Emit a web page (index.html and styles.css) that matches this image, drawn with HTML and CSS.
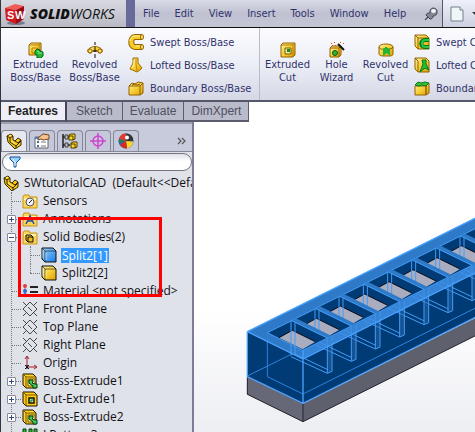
FILE: index.html
```html
<!DOCTYPE html>
<html lang="en">
<head>
<meta charset="utf-8">
<title>SolidWorks</title>
<link rel="stylesheet" href="styles.css">
</head>
<body>
<svg class="defs" aria-hidden="true">
  <defs>
    <linearGradient id="gold" x2="1" y2="1"><stop offset="0" stop-color="#fff0a0"/><stop offset=".5" stop-color="#f6cf36"/><stop offset="1" stop-color="#dda000"/></linearGradient>
    <linearGradient id="blue" x2="1" y2="1"><stop offset="0" stop-color="#9bd6ff"/><stop offset="1" stop-color="#1878e8"/></linearGradient>
    <symbol id="i-extrude" viewBox="0 0 16 16"><path d="M1 3l2-2h10v10l-2 2H1z" fill="url(#gold)" stroke="#946000"/><path d="M1 3h10v10M11 3l2-2M4 6h5v5H4z" fill="none" stroke="#b67a00"/><path d="M7 9l2-2 3 1v1l3 1v4l-2 2H9v-3l-2-1z" fill="#20b838" stroke="#006b17"/><path d="M10 11h4M9 9l2 1" stroke="#8ff08f"/></symbol>
    <symbol id="i-cut" viewBox="0 0 16 16"><path d="M1 3l2-2h12v12l-2 2H1z" fill="url(#gold)" stroke="#946000"/><path d="M1 3h12v12M13 3l2-2" fill="none" stroke="#b67a00"/><path d="M5 6h6v6H5z" fill="#efe8a0" stroke="#7a5a00"/><path d="M7 7h3v3H7z" fill="#168b26"/></symbol>
    <symbol id="i-revolve" viewBox="0 0 16 16"><path d="M3 11C0 11 0 7 3 6c3-2 7-2 10 0 3 1 3 5 0 5s-2-2-3-2H6c-1 0 0 2-3 2z" fill="url(#gold)" stroke="#946000"/><circle cx="3" cy="9" r="2" fill="#ffe869" stroke="#946000"/><circle cx="13" cy="9" r="2" fill="#ffe869" stroke="#946000"/><path d="M8 0v3M8 5v5M8 12v4M6 9h4" stroke="#111"/></symbol>
    <symbol id="i-sweep" viewBox="0 0 16 16"><path d="M14 3H7C2 3 2 13 7 13h7" fill="none" stroke="#946000" stroke-width="6"/><path d="M14 3H7C2 3 2 13 7 13h7" fill="none" stroke="#f6cd27" stroke-width="4"/><path d="M13 2H7C4 2 2 5 2 7M8 12h5" fill="none" stroke="#fff0a0"/><ellipse cx="14" cy="3" rx="1.5" ry="2.5" fill="#ffe564" stroke="#946000"/><ellipse cx="14" cy="13" rx="1.5" ry="2.5" fill="#ffe564" stroke="#946000"/></symbol>
    <symbol id="i-loft" viewBox="0 0 16 16"><path d="M5 1h5v5l4 5-2 2-3 2-7-3 3-6z" fill="url(#gold)" stroke="#a06b00"/><path d="M8 2v5l1 7" fill="none" stroke="#c58b00"/><path d="M6 3v4l-2 4" fill="none" stroke="#fff5b8"/></symbol>
    <symbol id="i-boundary" viewBox="0 0 16 16"><path d="M1 6l3-3 3 1 3-2 5 1v10l-3 2H1z" fill="url(#gold)" stroke="#946000"/><path d="M1 6h11v9M12 6l3-3M4 5l3-1 2 1 3-1" fill="none" stroke="#946000"/></symbol>
    <symbol id="i-wizard" viewBox="0 0 16 16"><path d="M1 6l2-2h9v9l-2 2H1z" fill="url(#gold)" stroke="#946000"/><path d="M1 6h9v9M10 6l2-2" fill="none" stroke="#946000"/><circle cx="6" cy="11" r="2.5" fill="#28b632" stroke="#14551a"/><path d="M9 2l6 6" stroke="#111" stroke-width="2"/><path d="M2 1h1v1H2zM5 0h1v1H5zM6 3h1v1H6zM3 3h1v1H3zM11 0h1v1h-1zM14 1h1v1h-1z" fill="#e84b00"/></symbol>
    <symbol id="i-revcut" viewBox="0 0 16 16"><path d="M1 5C1 1 15 1 15 5v7c0 2-3 2-4 2H5c-2 0-4-1-4-2z" fill="url(#gold)" stroke="#946000"/><path d="M1 5c1 3 4 2 5 2l2-2 2 2c2 0 4 0 5-2" fill="none" stroke="#946000"/><path d="M5 14V7l3-2 4 2v7l-3-3z" fill="#21b535"/></symbol>
    <symbol id="i-sweepcut" viewBox="0 0 16 16"><path d="M1 1h11l3 3v11H4l-3-3z" fill="url(#gold)" stroke="#946000"/><path d="M1 1l3 3v11M4 4h11" fill="none" stroke="#946000"/><path d="M15 6h-4c-5 0-5 7 0 7h4" fill="none" stroke="#00751a" stroke-width="4"/><path d="M15 6h-4c-4 0-4 7 0 7h4" fill="none" stroke="#29c642" stroke-width="2"/></symbol>
    <symbol id="i-loftcut" viewBox="0 0 16 16"><path d="M1 1h11l3 3v11H4l-3-3z" fill="url(#gold)" stroke="#946000"/><path d="M1 1l3 3v11" fill="none" stroke="#946000"/><path d="M8 3h4v4l3 6-4-2-5 4 3-8z" fill="#24bd36" stroke="#087819"/></symbol>
    <symbol id="i-boundcut" viewBox="0 0 16 16"><path d="M1 6h11v9H1zM12 6l3-3v10l-3 2z" fill="url(#gold)" stroke="#946000"/><path d="M1 5l3-3 3 1 4-1 4 1-3 3-4-1-3 1z" fill="#32c43a" stroke="#087819"/></symbol>
    <symbol id="i-part" viewBox="0 0 16 16"><path d="M1 3l4-2 2 2v4l2 1 3-3 3 2v5l-6 4-7-7z" fill="#f7c915" stroke="#352800"/><path d="M1 3l3 2 3-2M4 5v4l6 4 5-5M9 8l3 2 3-3M10 13v2" fill="none" stroke="#352800"/><path d="M3 3l2-1M5 8l4 3" stroke="#fff19a"/></symbol>
    <symbol id="i-folder" viewBox="0 0 16 16"><path d="M1 15V4l1-2h5l1 2h7v11z" fill="#fbd45a" stroke="#c79416"/><path d="M2 5h12v2H2z" fill="#fff3a8"/></symbol>
    <symbol id="i-plane" viewBox="0 0 16 16"><path d="M8 1l7 7-7 7-7-7zM1 1l4 4M11 11l4 4M6 6l4 4M1 15l3-3M12 4l3-3" fill="none" stroke="#222" stroke-width=".8"/></symbol>
    <symbol id="i-cube" viewBox="0 0 16 16"><path d="M1 1h11l3 3v11H4l-3-3z" stroke="#111"/><path d="M1 1l3 3v11M4 4h11" fill="none" stroke="#111" stroke-opacity=".6"/><path d="M5 6v7M2 3v8" stroke="#fff" stroke-opacity=".5"/></symbol>
    <symbol id="i-boss" viewBox="0 0 16 16"><path d="M1 1h10l3 3v11H4l-3-3z" fill="#ffd52b" stroke="#171000"/><path d="M1 1l3 3v11M4 4h10" fill="none" stroke="#775300"/><path d="M6 6h7v7H6z" fill="#fff0a0" stroke="#775300"/><path d="M7 7h4v2l-1 1 3 1h2v4h-4v-2L7 10z" fill="#42c95a" stroke="#003c0d"/></symbol>
    <symbol id="i-cutfeat" viewBox="0 0 16 16"><path d="M1 1h11l3 3v11H4l-3-3z" fill="#ffcd16" stroke="#171000"/><path d="M1 1l3 3v11M4 4h11" fill="none" stroke="#775300"/><path d="M7 7h5v5H7z" fill="#bcf0b4" stroke="#171000" stroke-width="1.5"/><path d="M7 10h3V7" fill="none" stroke="#08751d"/></symbol>
  </defs>
</svg>
<div class="app">
  <header class="titlebar">
    <div class="brand">
      <svg class="brand-cube" viewBox="0 0 22 24" aria-hidden="true"><ellipse cx="12" cy="21" rx="9" ry="2" fill="#777b8c"/><path d="M1 6l10-4 9 2-8 4z" fill="#f15c52"/><path d="M1 6l11 2v14L2 18z" fill="#d31920"/><path d="M20 4l-8 4v14l8-5z" fill="#a00913"/><text x="3" y="17" class="cube-text">S</text><text x="11" y="17" class="cube-text">W</text></svg>
      <span class="wordmark"><b>SOLID</b>WORKS</span>
    </div>
    <nav class="menu">
      <a href="#">File</a><a href="#">Edit</a><a href="#">View</a><a href="#">Insert</a><a href="#">Tools</a><a href="#">Window</a><a href="#">Help</a>
      <button class="pin" aria-label="Pin menu"><svg viewBox="0 0 14 14"><path d="M1 13l4-4" stroke="#555" stroke-width="1.5"/><path d="M2 8c1-2 2-2 4-2V4c1-5 8-3 7 1 0 3-2 4-4 4 0 2-1 3-3 3z" fill="#858794" stroke="#444650"/><ellipse cx="9.500" cy="4" rx="2.500" ry="2" fill="#f4f4f8"/></svg></button>
    </nav>
    <div class="quick">
      <button aria-label="New document"><svg viewBox="0 0 14 16"><path d="M1 1h9l3 3v11H1z" fill="#eef7f7" stroke="#72818a"/><path d="M10 1v3h3" fill="#fff" stroke="#72818a"/></svg></button>
      <button class="drop" aria-label="More new document options"></button>
    </div>
  </header>

  <section class="ribbon" aria-label="Features">
    <button class="big"><svg><use href="#i-extrude"/></svg>Extruded<br>Boss/Base</button>
    <button class="big"><svg><use href="#i-revolve"/></svg>Revolved<br>Boss/Base</button>
    <div class="stack boss">
      <button><svg><use href="#i-sweep"/></svg>Swept Boss/Base</button>
      <button><svg><use href="#i-loft"/></svg>Lofted Boss/Base</button>
      <button><svg><use href="#i-boundary"/></svg>Boundary Boss/Base</button>
    </div>
    <button class="big cut"><svg><use href="#i-cut"/></svg>Extruded<br>Cut</button>
    <button class="big cut"><svg><use href="#i-wizard"/></svg>Hole<br>Wizard</button>
    <button class="big cut"><svg><use href="#i-revcut"/></svg>Revolved<br>Cut</button>
    <div class="stack">
      <button><svg><use href="#i-sweepcut"/></svg>Swept Cut</button>
      <button><svg><use href="#i-loftcut"/></svg>Lofted Cut</button>
      <button><svg><use href="#i-boundcut"/></svg>Boundary Cut</button>
    </div>
  </section>

  <nav class="tabs">
    <button class="active">Features</button><button>Sketch</button><button>Evaluate</button><button>DimXpert</button>
  </nav>

  <main class="work">
    <aside class="panel">
      <div class="panel-tabs">
        <button class="active" aria-label="Feature tree"><svg><use href="#i-part"/></svg></button>
        <button aria-label="Properties"><svg viewBox="0 0 16 16"><path d="M1 4h13v11H1z" fill="#fff" stroke="#666"/><path d="M1 5h13" stroke="#4786ce" stroke-width="2"/><path d="M3 8h2v2H3zM3 12h2v2H3z" fill="#3b72b0"/><path d="M7 9h5M7 13h5" stroke="#777"/><path d="M4 5l5-4 6 1v4l-6 1-2-1-3 1z" fill="#f5c28f" stroke="#744620"/></svg></button>
        <button aria-label="Configurations"><svg viewBox="0 0 16 16"><path d="M1 1v14M1 4h6M1 12h7" stroke="#222" stroke-width="1.5"/><path d="M3 2h3v4H3zM3 10h3v4H3z" fill="#bbb" stroke="#444"/><path d="M7 2l2-1h4v5l-2 1H7zM9 10l2-1h4v5l-2 1H9z" fill="#ffdb25" stroke="#4d3b00"/><path d="M7 3h4v4M9 11h4v4" fill="none" stroke="#4d3b00"/></svg></button>
        <button aria-label="DimXpert manager"><svg viewBox="0 0 16 16"><circle cx="8" cy="8" r="5" fill="none" stroke="#cc45cf" stroke-width="1.5"/><path d="M8 0v16M0 8h16" stroke="#cc45cf" stroke-width="1.5"/></svg></button>
        <button aria-label="Display manager"><svg viewBox="0 0 16 16"><circle cx="8" cy="8" r="7.500" fill="#2564c8"/><path d="M8 8L1 6C2 2 5 0 8 .5z" fill="#e13a2e"/><path d="M1 6l7 2-5 2-2.500-1z" fill="#2c7c4b"/><path d="M8 .5c5 0 8 4 7 8L8 8z" fill="#353535"/><path d="M8 8l7 .5c0 4-3 6-6 7z" fill="#ffd323"/><path d="M8 8l1 7.500c-3 0-5-1-7-4z" fill="#d82a24"/><circle cx="9" cy="4.500" r="2" fill="#fff"/></svg></button>
        <button class="more" aria-label="More panel tabs"><svg viewBox="0 0 10 8"><path d="M1 1l3 3-3 3M5 1l3 3-3 3" fill="none" stroke="#555" stroke-width="1.2"/></svg></button>
      </div>
      <label class="filter"><svg viewBox="0 0 12 12"><path d="M1 1h10v2L7 7v4H5V7L1 3z" fill="#91d5fa" stroke="#174d9b"/><path d="M4 3l2 3v4" fill="none" stroke="#fff"/></svg><input type="text" aria-label="Filter tree"></label>
      <div class="tree">
        <div class="row root"><svg><use href="#i-part"/></svg><span>SWtutorialCAD&nbsp; (Default&lt;&lt;Default&gt;_Display</span></div>
        <ul>
          <li class="row"><i></i><svg viewBox="0 0 16 16"><use href="#i-folder"/><circle cx="8" cy="9" r="4" fill="#eef" stroke="#555"/><path d="M7 10l3-3" stroke="#222"/></svg><span>Sensors</span></li>
          <li class="row"><i></i><button class="toggle plus" aria-label="Expand"></button><svg viewBox="0 0 16 16"><use href="#i-folder"/><path d="M4 13l4-8 4 8M5 10h6" fill="none" stroke="#2447aa" stroke-width="1.5"/></svg><span>Annotations</span></li>
          <li class="row"><i></i><button class="toggle" aria-label="Collapse"></button><svg viewBox="0 0 16 16"><use href="#i-folder"/><path d="M4 6h5l2 2v5H6l-2-2zM6 8h5M6 8v5" fill="#f0bb22" stroke="#111"/></svg><span>Solid Bodies(2)</span></li>
          <li class="row child selected"><i></i><svg fill="url(#blue)"><use href="#i-cube"/></svg><span>Split2[1]</span></li>
          <li class="row child last"><i></i><svg fill="url(#gold)"><use href="#i-cube"/></svg><span>Split2[2]</span></li>
          <li class="row"><i></i><svg viewBox="0 0 16 16"><path d="M3 2v12" stroke="#777"/><circle cx="3" cy="3" r="2" fill="#e33b3b"/><circle cx="3" cy="8" r="2" fill="#3263d3"/><circle cx="3" cy="12" r="2" fill="#168ad4"/><path d="M8 4h8M8 9h8" stroke="#222" stroke-width="2"/></svg><span>Material &lt;not specified&gt;</span></li>
          <li class="row"><i></i><svg><use href="#i-plane"/></svg><span>Front Plane</span></li>
          <li class="row"><i></i><svg><use href="#i-plane"/></svg><span>Top Plane</span></li>
          <li class="row"><i></i><svg><use href="#i-plane"/></svg><span>Right Plane</span></li>
          <li class="row"><i></i><svg viewBox="0 0 16 16"><path d="M5 12V2M5 12h9M3 4l2-3 2 3M12 10l3 2-3 2" fill="none" stroke="#a31d28"/><path d="M3 10l4 4M7 10l-4 4M5 10v4" stroke="#111"/></svg><span>Origin</span></li>
          <li class="row"><i></i><button class="toggle plus" aria-label="Expand"></button><svg><use href="#i-boss"/></svg><span>Boss-Extrude1</span></li>
          <li class="row"><i></i><button class="toggle plus" aria-label="Expand"></button><svg><use href="#i-cutfeat"/></svg><span>Cut-Extrude1</span></li>
          <li class="row"><i></i><button class="toggle plus" aria-label="Expand"></button><svg><use href="#i-boss"/></svg><span>Boss-Extrude2</span></li>
          <li class="row"><i></i><svg viewBox="0 0 16 16"><path d="M1 2h3v5H1zM7 2h3v5H7zM12 2h3v5h-3zM1 9h3v5H1zM7 9h3v5H7zM12 9h3v5h-3z" fill="#28b22e" stroke="#063d0c"/></svg><span>LPattern3</span></li>
        </ul>
        <div class="highlight"></div>
      </div>
    </aside>
    <svg class="viewport" viewBox="-123 -204 843 930" preserveAspectRatio="xMinYMin slice" role="img" aria-label="Extruded block with a row of pockets">
      <defs>
        <g id="pocket">
          <path d="M97 428L170 392 277 444 203 481z" fill="#003b76"/>
          <path d="M132 443L172 421 241 455 203 478z" fill="#a9adbf"/>
          <path d="M132 443L172 421 241 455" fill="none" stroke="#080c18" stroke-width="3"/>
          <path d="M170 392L183 385 290 438 277 444z" fill="#2f7ac8"/>
          <path d="M278 444v105l12-6V438z" fill="#2a6eb7" fill-opacity=".45"/>
          <path d="M97 428L170 392 277 444 203 481zM168 392v105M180 398v94M277 444v105M291 440v104M168 500l109 50 14-6M180 492l98 47" fill="none" stroke="#459df7" stroke-width="3"/>
        </g>
      </defs>
      <path d="M37 562V613L204 695 850 373V320L204 641z" fill="#5e606e"/>
      <path d="M37 562V613L204 695V641z" fill="#666878"/>
      <path d="M37 562V613L204 695 850 373M204 641v54" fill="none" stroke="#24252c" stroke-width="3"/>
      <path d="M37 425L850 20V318L204 640 37 560z" fill="#003b76"/>
      <path d="M37 425L850 20V184L204 507z" fill="#2f7ac8"/>
      <path d="M37 558L203 476M97 428V560L204 612 850 290" fill="none" stroke="#2f83d9" stroke-width="3"/>
      <use href="#pocket" x="579" y="-290"/><use href="#pocket" x="507" y="-254"/><use href="#pocket" x="434" y="-218"/><use href="#pocket" x="362" y="-182"/><use href="#pocket" x="290" y="-146"/><use href="#pocket" x="217" y="-109"/><use href="#pocket" x="144" y="-73"/><use href="#pocket" x="72" y="-36"/><use href="#pocket"/>
      <path d="M203 481L850 158V184L204 507z" fill="#3b8be0" fill-opacity=".65"/>
      <path d="M37 425L850 20M37 425L204 507 850 184M37 425V560L204 640 850 318M204 481V640" fill="none" stroke="#4aa1fb" stroke-width="4"/>
    </svg>
  </main>
</div>
</body>
</html>
```
FILE: styles.css
```css
* { box-sizing: border-box; }
body { margin: 0; background: #fff; }
button { margin: 0; padding: 0; border: 0; background: none; font: inherit; color: inherit; }
svg { display: block; flex: none; }
.defs { position: absolute; width: 0; height: 0; }

.app {
  display: flex;
  flex-direction: column;
  height: 100vh;
  overflow: hidden;
  border-left: 1px solid #33343c;
  font: 11px/13px "DejaVu Sans Condensed", "DejaVu Sans", sans-serif;
  color: #30336c;
}

.titlebar {
  display: flex;
  flex: none;
  height: 28px;
  background: linear-gradient(#d9dbe8, #bfc1d1 50%, #c5c7d7);
  border-bottom: 1px solid #111;
}
.brand { display: flex; flex: none; align-items: center; gap: 4px; width: 125px; padding-left: 3px; background: linear-gradient(#d8d9e0, #b9bac4); }
.brand-cube { width: 22px; height: 24px; }
.cube-text { font: bold 11px "Liberation Sans", sans-serif; fill: #fff; }
.wordmark { font: italic 14px/16px "Open Sans", sans-serif; color: #111; }
.wordmark b { font-weight: 800; }
.menu { display: flex; flex: none; align-items: center; gap: 15px; width: 317px; padding: 0 4px 0 8px; border-left: 9px solid #686b99; border-right: 1px solid #555765; }
.menu a { color: inherit; text-decoration: none; }
.pin { margin-left: auto; }
.pin svg { width: 14px; height: 14px; }
.quick { display: flex; flex: 1; align-items: center; gap: 8px; padding-left: 7px; background: linear-gradient(#eef0fa, #cdd0e0); }
.quick svg { width: 14px; height: 16px; }
.drop { flex: none; border: 4px solid transparent; border-top-color: #333; border-bottom: 0; }

.ribbon {
  display: flex;
  flex: none;
  height: 74px;
  overflow: hidden;
  background: linear-gradient(#fcfcff, #eceef6 50%, #d5d7e5);
  border-bottom: 2px solid #55576a;
  white-space: nowrap;
}
.big { display: flex; flex: none; flex-direction: column; align-items: center; width: 59px; padding-top: 14px; }
.big:first-child { margin-left: 5px; }
.big.cut { width: 49px; }
.big svg, .stack svg { width: 16px; height: 16px; }
.stack { display: flex; flex: none; flex-direction: column; gap: 7px; padding: 6px 0 0 4px; }
.stack button { display: flex; align-items: center; gap: 6px; text-align: left; }
.stack.boss { width: 136px; margin-right: 3px; border-right: 1px solid #b9bbc9; }

.tabs { display: flex; flex: none; height: 20px; font: 12px/16px "Liberation Sans", sans-serif; }
.tabs button { padding: 0 9px; background: #babccc; border: 2px solid #5b5d6e; border-width: 0 1px 2px 0; color: #4e5060; }
.tabs button:nth-child(n+3) { padding: 0 7px; }
.tabs .active { padding: 0 7px; background: #eeeff6; border-right: 2px solid #444656; color: #222; font-weight: bold; }

.work { display: flex; flex: 1; min-height: 0; }
.panel { display: flex; flex: none; flex-direction: column; width: 193px; overflow: hidden; background: #e0e2ea; border-right: 2px solid #7b7d97; }
.panel-tabs { display: flex; flex: none; align-items: flex-end; gap: 2px; height: 30px; border-top: 2px solid #9da0ae; background: #c8cbdc; border-bottom: 1px solid #858797; }
.panel-tabs button { display: flex; align-items: center; justify-content: center; width: 26px; height: 21px; border: 1px solid #858797; border-bottom: 0; border-radius: 4px 4px 0 0; background: #c5c7da; }
.panel-tabs .active { background: #e6e7ef; }
.panel-tabs svg { width: 16px; height: 16px; }
.panel-tabs .more { width: 20px; margin-left: auto; border: 0; background: none; }
.panel-tabs .more svg { width: 10px; height: 8px; }
.filter { display: flex; flex: none; align-items: center; height: 18px; margin: 1px 0 3px 1px; padding-left: 6px; background: linear-gradient(#dfe0e8, #fff 45%, #fff); border: 1px solid #737583; border-radius: 9px; }
.filter svg { width: 12px; height: 12px; }
.filter input { flex: 1; min-width: 0; height: 14px; border: 0; background: none; }

.tree { position: relative; font: 12px/18px "Open Sans", "Noto Sans", sans-serif; color: #101014; white-space: nowrap; }
.tree ul { position: relative; margin: 0; padding: 0; list-style: none; }
.tree ul::before { content: ""; position: absolute; top: 0; bottom: 0; left: 10px; border-left: 1px dotted #777; }
.row { position: relative; display: flex; align-items: center; gap: 4px; height: 18px; padding-left: 21px; }
.root { padding-left: 2px; }
.row svg { width: 16px; height: 16px; }
.row span { padding: 0 1px; }
.row i { position: absolute; left: 10px; top: 9px; width: 10px; border-top: 1px dotted #777; }
.child { padding-left: 40px; }
.child i { left: 29px; }
.child::before { content: ""; position: absolute; left: 29px; top: 0; height: 18px; border-left: 1px dotted #777; }
.child.last::before { height: 9px; }
.selected span { background: #3399ff; color: #fff; line-height: 15px; }
.toggle { position: absolute; left: 6px; top: 5px; width: 9px; height: 9px; border: 1px solid #888a98; border-radius: 1px; background: linear-gradient(#304c8c, #304c8c) center / 5px 1px no-repeat #fff; }
.plus { background: linear-gradient(#304c8c, #304c8c) center / 5px 1px no-repeat, linear-gradient(#304c8c, #304c8c) center / 1px 5px no-repeat #fff; }
.highlight { position: absolute; left: 17px; top: 43px; width: 144px; height: 80px; border: 3px solid #f00; pointer-events: none; }

.viewport { flex: 1; min-width: 0; width: 100%; height: 100%; background: linear-gradient(#fff 60%, #edeef3); }
```
